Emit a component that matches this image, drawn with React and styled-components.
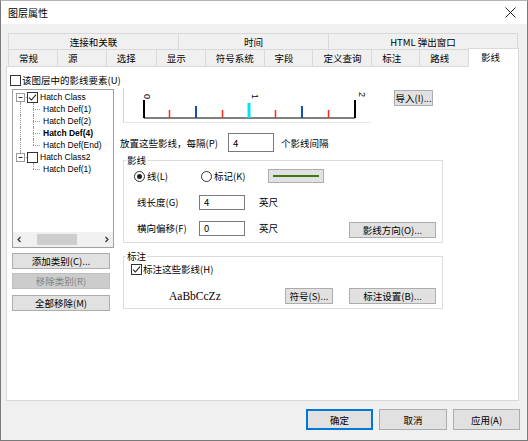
import styled, { createGlobalStyle } from 'styled-components';

const UI = `"Noto Sans CJK SC", "Liberation Sans", sans-serif`;

const GlobalStyle = createGlobalStyle`
  html, body { margin: 0; padding: 0; background: #fff; }
  body { font-family: ${UI}; font-size: 9.5px; color: #000; }
  * { box-sizing: border-box; }
`;

const row1Tabs = [
  { label: '连接和关联', width: 171 },
  { label: '时间', width: 151 },
  { label: 'HTML 弹出窗口', width: 190 },
];

const row2Tabs = [
  { label: '常规', width: 50 },
  { label: '源', width: 50 },
  { label: '选择', width: 51 },
  { label: '显示', width: 50 },
  { label: '符号系统', width: 60 },
  { label: '字段', width: 50 },
  { label: '定义查询', width: 60 },
  { label: '标注', width: 49 },
  { label: '路线', width: 50 },
  { label: '影线', width: 51, active: true },
];

// 树节点
const treeRows = [
  { level: 0, label: 'Hatch Class', checked: true, line: 'bottom' },
  { level: 1, label: 'Hatch Def(1)', parentLine: true, line: 'full' },
  { level: 1, label: 'Hatch Def(2)', parentLine: true, line: 'full' },
  { level: 1, label: 'Hatch Def(4)', parentLine: true, line: 'full', bold: true },
  { level: 1, label: 'Hatch Def(End)', parentLine: true, line: 'top' },
  { level: 0, label: 'Hatch Class2', checked: false, line: 'top' },
  { level: 1, label: 'Hatch Def(1)', parentLine: false, line: 'top' },
];

// 预览中的影线刻度
const ticks = [
  { x: 20, h: 18, w: 2, color: '#000' },
  { x: 45.5, h: 8, w: 1.5, color: '#ff2a1a' },
  { x: 72, h: 12, w: 2, color: '#1450b4' },
  { x: 98.5, h: 8, w: 1.5, color: '#ff2a1a' },
  { x: 125, h: 15, w: 3, color: '#00e5f5' },
  { x: 151.5, h: 8, w: 1.5, color: '#ff2a1a' },
  { x: 178, h: 12, w: 2, color: '#1450b4' },
  { x: 204.5, h: 8, w: 1.5, color: '#ff2a1a' },
  { x: 231, h: 18, w: 2, color: '#000' },
];

function CheckMark() {
  return (
    <svg width="9" height="9" viewBox="0 0 9 9">
      <path d="M1 4.6 L3.4 7 L8 1.6" fill="none" stroke="#222" strokeWidth="1.1" />
    </svg>
  );
}

function Check({ checked }) {
  return <CheckBox>{checked && <CheckMark />}</CheckBox>;
}

function TreeNode({ row }) {
  if (row.level === 0) {
    return (
      <TreeRow>
        <Guide $v={row.line} $h>
          <Expander>
            <svg width="7" height="7" viewBox="0 0 7 7">
              <path d="M1.5 3.5 H5.5" stroke="#333" strokeWidth="1" />
            </svg>
          </Expander>
        </Guide>
        <Check checked={row.checked} />
        <TreeLabel $indent={2}>{row.label}</TreeLabel>
      </TreeRow>
    );
  }
  return (
    <TreeRow>
      <Guide $v={row.parentLine ? 'full' : 'none'} />
      <Guide $v={row.line} $h $w={13} $left={6} />
      <TreeLabel $indent={3} $bold={row.bold}>
        {row.label}
      </TreeLabel>
    </TreeRow>
  );
}

function HatchPreview() {
  return (
    <svg width="247" height="34" viewBox="0 0 247 34">
      <line x1="20" y1="30" x2="231" y2="30" stroke="#000" strokeWidth="1" />
      {ticks.map((t, i) => (
        <rect key={i} x={t.x - t.w / 2} y={30 - t.h} width={t.w} height={t.h} fill={t.color} />
      ))}
      <text x="18" y="6" fontSize="9" fontFamily="Liberation Sans" transform="rotate(90 18 6)" dy="-2">0</text>
      <text x="126" y="6" fontSize="9" fontFamily="Liberation Sans" transform="rotate(90 126 6)" dy="-2">1</text>
      <text x="233" y="4" fontSize="9" fontFamily="Liberation Sans" transform="rotate(90 233 4)" dy="-2">2</text>
    </svg>
  );
}

export default function App() {
  return (
    <>
      <GlobalStyle />
      <Window>
        <TitleBar>
          <span>图层属性</span>
          <svg width="11" height="11" viewBox="0 0 11 11">
            <path d="M0.5 0.5 L10.5 10.5 M10.5 0.5 L0.5 10.5" stroke="#222" strokeWidth="1" />
          </svg>
        </TitleBar>

        <Body>
          <TabStrip>
            <TabRow $h={16}>
              {row1Tabs.map((t) => (
                <Tab key={t.label} $w={t.width} $center>
                  {t.label}
                </Tab>
              ))}
            </TabRow>
            <TabRow $h={17}>
              {row2Tabs.map((t) => (
                <Tab key={t.label} $w={t.width} $active={t.active}>
                  {t.label}
                </Tab>
              ))}
            </TabRow>
          </TabStrip>

          <Panel>
            <CheckRow>
              <Check />
              <span>该图层中的影线要素(U)</span>
            </CheckRow>

            <Columns>
              <LeftCol>
                <Tree>
                  <TreeList>
                    {treeRows.map((row, i) => (
                      <TreeNode key={i} row={row} />
                    ))}
                  </TreeList>
                  <ScrollBar>
                    <svg width="7" height="7" viewBox="0 0 7 7">
                      <path d="M4.5 1 L2 3.5 L4.5 6" fill="none" stroke="#333" strokeWidth="1.2" />
                    </svg>
                    <ScrollTrack>
                      <ScrollThumb />
                    </ScrollTrack>
                    <svg width="7" height="7" viewBox="0 0 7 7">
                      <path d="M2.5 1 L5 3.5 L2.5 6" fill="none" stroke="#333" strokeWidth="1.2" />
                    </svg>
                  </ScrollBar>
                </Tree>
                <SideButton $mt={5}>添加类别(C)...</SideButton>
                <SideButton $mt={4} $disabled>移除类别(R)</SideButton>
                <SideButton $mt={6}>全部移除(M)</SideButton>
              </LeftCol>

              <RightCol>
                <TopRow>
                  <Preview>
                    <HatchPreview />
                  </Preview>
                  <Button $w={39} $h={16} style={{ marginLeft: 23, marginTop: 2 }}>
                    导入(I)...
                  </Button>
                </TopRow>

                <PlaceRow>
                  <PlaceLabel>放置这些影线，每隔(P)</PlaceLabel>
                  <TextInput $h={19}>4</TextInput>
                  <Suffix $ml={7}>个影线间隔</Suffix>
                </PlaceRow>

                <GroupBox $mt={8}>
                  <GroupTitle>影线</GroupTitle>
                  <RadioRow>
                    <RadioItem>
                      <Radio $on />
                      <span>线(L)</span>
                    </RadioItem>
                    <RadioItem>
                      <Radio />
                      <span>标记(K)</span>
                    </RadioItem>
                    <Swatch>
                      <SwatchLine />
                    </Swatch>
                  </RadioRow>
                  <FieldRow $mt={12}>
                    <FieldLabel>线长度(G)</FieldLabel>
                    <TextInput $h={15}>4</TextInput>
                    <Suffix $ml={14}>英尺</Suffix>
                  </FieldRow>
                  <FieldRow $mt={11}>
                    <FieldLabel>横向偏移(F)</FieldLabel>
                    <TextInput $h={15}>0</TextInput>
                    <Suffix $ml={14}>英尺</Suffix>
                    <Button $w={87} $h={16} style={{ marginLeft: 'auto', marginTop: 1 }}>
                      影线方向(O)...
                    </Button>
                  </FieldRow>
                </GroupBox>

                <GroupBox $mt={13}>
                  <GroupTitle>标注</GroupTitle>
                  <LabelCheckRow>
                    <Check checked />
                    <span>标注这些影线(H)</span>
                  </LabelCheckRow>
                  <SampleRow>
                    <Sample>AaBbCcZz</Sample>
                    <Button $w={48} $h={16}>符号(S)...</Button>
                    <Button $w={87} $h={16} style={{ marginLeft: 16 }}>
                      标注设置(B)...
                    </Button>
                  </SampleRow>
                </GroupBox>
              </RightCol>
            </Columns>
          </Panel>

          <Footer>
            <FooterButton $default>确定</FooterButton>
            <FooterButton $w={68}>取消</FooterButton>
            <FooterButton>应用(A)</FooterButton>
          </Footer>
        </Body>
      </Window>
    </>
  );
}

// ---------------- 窗口 ------------------------
const Window = styled.div`
  width: 528px;
  height: 441px;
  display: flex;
  flex-direction: column;
  background: #f0f0f0;
  border: 1px solid #7a7a7a;
  border-top-color: #b5b5b5;
`;

const TitleBar = styled.div`
  height: 23px;
  flex: none;
  background: #fff;
  display: flex;
  align-items: center;
  justify-content: space-between;
  padding: 0 11px 0 7px;
  font-size: 10px;
`;

const Body = styled.div`
  flex: 1;
  display: flex;
  flex-direction: column;
  padding: 9px 8px 0 5px;
`;

// ---------------- 选项卡 ------------------------
const TabStrip = styled.div`
  padding-left: 2px;
`;

const TabRow = styled.div`
  display: flex;
  height: ${({ $h }) => $h}px;
`;

const Tab = styled.div`
  position: relative;
  width: ${({ $w }) => $w}px;
  height: ${({ $active }) => ($active ? 19 : 17)}px;
  margin-left: -1px;
  margin-top: ${({ $active }) => ($active ? -1 : 0)}px;
  &:first-child { margin-left: 0; }
  display: flex;
  align-items: center;
  justify-content: ${({ $center }) => ($center ? 'center' : 'flex-start')};
  padding-left: ${({ $center, $active }) => ($center ? 0 : $active ? 12 : 10)}px;
  padding-bottom: ${({ $active }) => ($active ? 2 : 0)}px;
  border: 1px solid #d9d9d9;
  border-bottom: none;
  background: ${({ $active }) => ($active ? '#fff' : '#f0f0f0')};
  z-index: ${({ $active }) => ($active ? 2 : 0)};
  white-space: nowrap;
`;

const Panel = styled.div`
  height: 335px;
  flex: none;
  background: #fff;
  border: 1px solid #d9d9d9;
  padding: 6px 0 0 3px;
`;

// ---------------- 复选框 ------------------------
const CheckRow = styled.div`
  display: flex;
  align-items: center;
  gap: 1px;
  height: 14px;
`;

const CheckBox = styled.span`
  width: 11px;
  height: 11px;
  flex: none;
  border: 1px solid #333;
  background: #fff;
  display: flex;
  align-items: center;
  justify-content: center;
`;

const Columns = styled.div`
  display: flex;
  align-items: flex-start;
  margin-top: 1px;
`;

// ---------------- 左侧树 ------------------------
const LeftCol = styled.div`
  margin-left: 2px;
  width: 102px;
  display: flex;
  flex-direction: column;
`;

const Tree = styled.div`
  margin-top: 1px;
  height: 159px;
  border: 1px solid #a0a0a0;
  display: flex;
  flex-direction: column;
`;

const TreeList = styled.div`
  flex: 1;
  padding-top: 1px;
`;

const TreeRow = styled.div`
  display: flex;
  align-items: center;
  height: 12px;
`;

const Guide = styled.div`
  position: relative;
  width: ${({ $w }) => $w || 14}px;
  height: 12px;
  flex: none;
  display: flex;
  align-items: center;
  padding-left: 3px;

  &::before {
    content: '';
    display: ${({ $v }) => (!$v || $v === 'none' ? 'none' : 'block')};
    position: absolute;
    left: ${({ $left }) => $left ?? 7}px;
    top: ${({ $v }) => ($v === 'bottom' ? 6 : 0)}px;
    bottom: ${({ $v }) => ($v === 'top' ? 6 : 0)}px;
    border-left: 1px dotted #9a9a9a;
  }

  &::after {
    content: '';
    display: ${({ $h }) => ($h ? 'block' : 'none')};
    position: absolute;
    left: ${({ $left }) => $left ?? 7}px;
    right: 0;
    top: 6px;
    border-top: 1px dotted #9a9a9a;
  }
`;

const Expander = styled.span`
  position: relative;
  z-index: 1;
  width: 9px;
  height: 9px;
  border: 1px solid #9a9a9a;
  background: #fff;
  display: flex;
  align-items: center;
  justify-content: center;
`;

const TreeLabel = styled.span`
  margin-left: ${({ $indent }) => $indent}px;
  font-family: "Liberation Sans", sans-serif;
  font-size: 8.5px;
  font-weight: ${({ $bold }) => ($bold ? 700 : 400)};
  white-space: nowrap;
`;

const ScrollBar = styled.div`
  height: 15px;
  flex: none;
  background: #f0f0f0;
  display: flex;
  align-items: center;
  padding: 0 3px;
  gap: 2px;
`;

const ScrollTrack = styled.div`
  flex: 1;
  height: 11px;
  padding-left: 12px;
`;

const ScrollThumb = styled.div`
  width: 40px;
  height: 11px;
  background: #cdcdcd;
`;

const SideButton = styled.div`
  width: 98px;
  height: 16px;
  margin-top: ${({ $mt }) => $mt}px;
  display: flex;
  align-items: center;
  justify-content: center;
  border: 1px solid ${({ $disabled }) => ($disabled ? '#bfbfbf' : '#adadad')};
  background: ${({ $disabled }) => ($disabled ? '#cccccc' : '#e1e1e1')};
  color: ${({ $disabled }) => ($disabled ? '#838383' : '#000')};
`;

// ---------------- 右侧 ------------------------
const RightCol = styled.div`
  margin-left: 6px;
  width: 323px;
  display: flex;
  flex-direction: column;
`;

const TopRow = styled.div`
  display: flex;
  align-items: flex-start;
`;

const Preview = styled.div`
  margin-left: 3px;
  width: 248px;
  height: 35px;
  border-left: 1px solid #d4d4d4;
  border-bottom: 1px solid #e6e6e6;
  display: flex;
`;

const Button = styled.div`
  width: ${({ $w }) => $w}px;
  height: ${({ $h }) => $h}px;
  flex: none;
  display: flex;
  align-items: center;
  justify-content: center;
  border: 1px solid #adadad;
  background: #e1e1e1;
  white-space: nowrap;
`;

const PlaceRow = styled.div`
  margin-top: 10px;
  height: 19px;
  display: flex;
  align-items: center;
`;

const PlaceLabel = styled.span`
  width: 108px;
  white-space: nowrap;
`;

const TextInput = styled.div`
  width: 46px;
  height: ${({ $h }) => $h}px;
  flex: none;
  border: 1px solid #7a7a7a;
  background: #fff;
  padding-left: 4px;
  display: flex;
  align-items: center;
`;

const Suffix = styled.span`
  margin-left: ${({ $ml }) => $ml}px;
  white-space: nowrap;
`;

const GroupBox = styled.div`
  margin: ${({ $mt }) => $mt}px 0 0 3px;
  width: 320px;
  border: 1px solid #dcdcdc;
  padding: 0 6px 4px 0;
`;

const GroupTitle = styled.div`
  margin: -7px 0 0 2px;
  width: fit-content;
  padding: 0 1px;
  background: #fff;
  line-height: 12px;
`;

const RadioRow = styled.div`
  margin-top: 3px;
  height: 14px;
  display: flex;
  align-items: center;
  padding-left: 10px;
`;

const RadioItem = styled.div`
  width: 67px;
  display: flex;
  align-items: center;
  gap: 2px;
`;

const Radio = styled.span`
  width: 11px;
  height: 11px;
  border-radius: 50%;
  border: 1px solid #333;
  display: flex;
  align-items: center;
  justify-content: center;

  &::after {
    content: '';
    width: 5px;
    height: 5px;
    border-radius: 50%;
    background: ${({ $on }) => ($on ? '#222' : 'transparent')};
  }
`;

const Swatch = styled.div`
  width: 56px;
  height: 14px;
  border: 1px solid #adadad;
  background: #e1e1e1;
  display: flex;
  align-items: center;
  justify-content: center;
`;

const SwatchLine = styled.div`
  width: 46px;
  height: 2px;
  background: #3f7a10;
`;

const FieldRow = styled.div`
  margin-top: ${({ $mt }) => $mt}px;
  display: flex;
  align-items: flex-start;
  padding-left: 13px;
  line-height: 15px;
`;

const FieldLabel = styled.span`
  width: 62px;
  white-space: nowrap;
`;

const LabelCheckRow = styled.div`
  margin-top: 1px;
  height: 12px;
  display: flex;
  align-items: center;
  gap: 1px;
  padding-left: 7px;
`;

const SampleRow = styled.div`
  margin-top: 13px;
  height: 16px;
  display: flex;
  align-items: center;
  padding-left: 45px;
`;

const Sample = styled.span`
  width: 116px;
  font-family: "Liberation Serif", serif;
  font-size: 11.5px;
`;

// ---------------- 底部按钮 ------------------------
const Footer = styled.div`
  margin-top: 8px;
  margin-right: -1px;
  display: flex;
  justify-content: flex-end;
  gap: 6px;
`;

const FooterButton = styled.div`
  width: ${({ $w }) => $w || 67}px;
  height: 21px;
  display: flex;
  align-items: center;
  justify-content: center;
  background: #e1e1e1;
  border: 1px solid ${({ $default }) => ($default ? '#0078d7' : '#adadad')};
  box-shadow: ${({ $default }) => ($default ? 'inset 0 0 0 1px #0078d7' : 'none')};
`;
